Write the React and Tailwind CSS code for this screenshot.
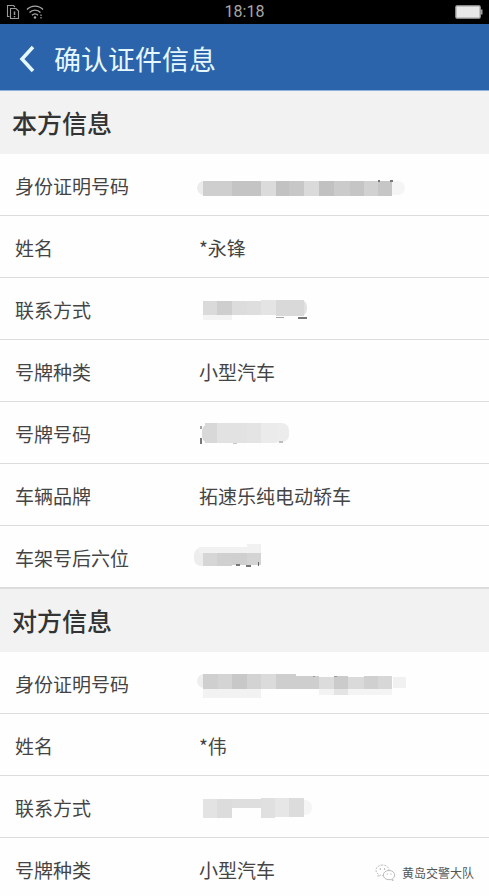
/* each block: x, y, width, height, fill */
const MASKS = {
  ownId: {
    blocks: [
      [4, 14, 29, 15, '#cecece'], [33, 14, 29, 15, '#c4c4c4'], [62, 14, 15, 15, '#dbdbdb'],
      [77, 14, 13, 15, '#c2c2c2'], [90, 14, 15, 15, '#c7c7c7'], [105, 14, 15, 15, '#dadada'],
      [120, 14, 15, 15, '#c1c1c1'], [135, 14, 16, 15, '#cbcbcb'], [151, 14, 14, 15, '#c5c5c5'],
      [165, 14, 14, 15, '#d1d1d1'], [179, 14, 14, 15, '#c6c6c6'],
      [179, 13, 2, 2, '#777777'], [191, 13, 3, 2, '#777777'],
    ],
    soft: [[-2, 14, 14, 14, '#ececec'], [184, 14, 22, 14, '#f5f5f5']],
  },
  ownPhone: {
    blocks: [
      [4, 10, 14, 14, '#dadada'], [18, 10, 15, 14, '#cecece'], [33, 10, 15, 14, '#dcdcdc'],
      [48, 10, 14, 14, '#dedede'], [62, 9, 15, 15, '#e4e4e4'], [77, 9, 28, 16, '#d9d9d9'],
      [4, 24, 29, 5, '#f3f3f3'], [77, 26, 8, 1, '#a3a3a3'], [99, 26, 9, 2, '#777777'],
    ],
    soft: [[96, 9, 12, 16, '#e2e2e2']],
  },
  ownPlate: {
    blocks: [
      [1, 11, 2, 3, '#a3a3a3'], [1, 23, 2, 6, '#777777'],
      [6, 8, 12, 20, '#d8d8d8'], [18, 8, 30, 20, '#e2e2e2'], [48, 8, 14, 20, '#e4e4e4'],
      [62, 8, 16, 20, '#ebebeb'], [34, 28, 4, 1, '#c9c9c9'], [80, 26, 4, 2, '#bdbdbd'],
    ],
    soft: [[3, 9, 14, 19, '#d8d8d8'], [66, 8, 24, 19, '#ececec']],
  },
  ownFrame: {
    blocks: [
      [0, 8, 48, 6, '#f1f1f1'], [48, 5, 14, 9, '#f1f1f1'],
      [4, 14, 14, 13, '#d6d6d6'], [18, 14, 15, 13, '#d0d0d0'], [33, 14, 15, 12, '#cfcfcf'],
      [48, 14, 14, 12, '#d4d4d4'],
      [37, 25, 4, 2, '#777777'], [47, 26, 5, 2, '#777777'], [59, 23, 1, 4, '#666666'],
    ],
    soft: [[-5, 9, 16, 18, '#ededed']],
  },
  otherId: {
    blocks: [
      [4, 9, 15, 15, '#cfcfcf'], [19, 9, 14, 15, '#d4d4d4'], [33, 9, 15, 15, '#c8c8c8'],
      [48, 9, 14, 15, '#d3d3d3'], [62, 9, 15, 15, '#dbdbdb'], [77, 9, 20, 15, '#cecece'],
      [97, 11, 23, 13, '#cecece'], [120, 12, 15, 12, '#dcdcdc'], [135, 11, 14, 13, '#cbcbcb'],
      [149, 12, 16, 12, '#dadada'], [165, 11, 14, 13, '#d0d0d0'], [179, 11, 14, 13, '#d7d7d7'],
      [4, 24, 58, 9, '#f2f2f2'], [120, 24, 15, 6, '#f3f3f3'], [135, 24, 14, 6, '#e4e4e4'],
      [149, 24, 44, 6, '#f4f4f4'], [194, 12, 13, 11, '#f1f1f1'],
      [114, 11, 2, 1, '#999999'], [135, 11, 3, 1, '#999999'],
    ],
    soft: [[-2, 9, 14, 14, '#eeeeee']],
  },
  otherPhone: {
    blocks: [
      [4, 10, 14, 19, '#e3e3e3'], [18, 10, 15, 19, '#dcdcdc'], [33, 10, 29, 9, '#dedede'],
      [62, 9, 14, 20, '#e0e0e0'], [76, 9, 14, 19, '#e6e6e6'], [90, 9, 15, 19, '#dcdcdc'],
    ],
    soft: [[96, 11, 17, 15, '#f5f5f5']],
  },
}

const SECTIONS = [
  {
    title: '本方信息',
    rows: [
      { label: '身份证明号码', mask: 'ownId' },
      { label: '姓名', value: '*永锋' },
      { label: '联系方式', mask: 'ownPhone' },
      { label: '号牌种类', value: '小型汽车' },
      { label: '号牌号码', mask: 'ownPlate' },
      { label: '车辆品牌', value: '拓速乐纯电动轿车' },
      { label: '车架号后六位', mask: 'ownFrame' },
    ],
  },
  {
    title: '对方信息',
    rows: [
      { label: '身份证明号码', mask: 'otherId' },
      { label: '姓名', value: '*伟' },
      { label: '联系方式', mask: 'otherPhone' },
      { label: '号牌种类', value: '小型汽车' },
    ],
  },
]

function Mask({ name }) {
  const { blocks, soft } = MASKS[name]
  return (
    <svg className="block h-10 w-[210px] overflow-visible" viewBox="0 0 210 40" aria-hidden="true">
      {soft.map(([x, y, w, h, fill], i) => (
        <rect key={i} x={x} y={y} width={w} height={h} rx="7" fill={fill} />
      ))}
      {blocks.map(([x, y, w, h, fill], i) => (
        <rect key={i} x={x} y={y} width={w} height={h} fill={fill} />
      ))}
    </svg>
  )
}

function StatusBar() {
  return (
    <div className="grid h-6 shrink-0 grid-cols-3 items-center bg-black px-1.5 text-[#a8a8a8]">
      <div className="flex items-center gap-1.5">
        <svg width="14" height="16" viewBox="0 0 14 16" fill="none" stroke="#9a9a9a" strokeWidth="1.1">
          <path d="M3.5 12.5h-2v-11h6l1.5 1.5" />
          <path d="M4.5 4.5h5.5l2.5 2.5v7.5h-8z" />
          <path d="M8.5 7.5v3.500M8.500 12v1.300" strokeWidth="1.5" />
        </svg>
        <svg width="18" height="16" viewBox="0 0 18 16" fill="none" stroke="#a8a8a8" strokeWidth="1.4">
          <path d="M1 5.500C5.500 1 12.500 1 17 5.500M3.500 8.500c3.200-3.200 7.800-3.200 11 0M6 11.200c1.800-1.800 4.200-1.800 6 0" />
          <circle cx="9" cy="13.5" r="1.2" fill="#a8a8a8" stroke="none" />
          <path d="M15 10.500v1.500M15 13v1.500" strokeWidth="1.2" />
        </svg>
      </div>
      <div className="text-center font-['Roboto',sans-serif] text-base leading-6">18:18</div>
      <svg className="justify-self-end" width="28" height="14" viewBox="0 0 28 14">
        <rect x="1" y="1" width="24" height="12" rx="1" fill="#e8e8e8" stroke="#b5b5b5" strokeWidth="1.5" />
        <rect x="25.5" y="4.5" width="2" height="5" fill="#a0a0a0" />
      </svg>
    </div>
  )
}

function Watermark() {
  return (
    <div className="absolute right-[15px] bottom-3.5 flex items-center gap-1.5">
      <svg width="21" height="18" viewBox="0 0 21 18" fill="#ffffff" stroke="#b4b4b4" strokeWidth="0.9">
        <path d="M7.500 1C3.800 1 1 3.300 1 6.200c0 1.700 1 3.100 2.500 4.100l-.6 2.200 2.400-1.300c.7.200 1.400.3 2.200.3 3.700 0 6.500-2.300 6.500-5.200S11.200 1 7.500 1z" strokeDasharray="2 1" />
        <path d="M14 6.500c-3.200 0-5.700 2-5.700 4.600s2.500 4.600 5.700 4.600c.7 0 1.300-.1 1.900-.3l2.200 1.200-.6-1.900c1.400-.9 2.200-2.100 2.200-3.600 0-2.600-2.500-4.600-5.700-4.600z" />
        <g fill="#9a9a9a" stroke="none">
          <circle cx="5.300" cy="5" r="0.7" />
          <circle cx="9.500" cy="5" r="0.7" />
          <circle cx="12.200" cy="10" r="0.6" />
          <circle cx="16" cy="10" r="0.6" />
        </g>
      </svg>
      <span className="text-xs text-[#555555]">黄岛交警大队</span>
    </div>
  )
}

export default function App() {
  return (
    <div className="relative flex h-screen flex-col overflow-hidden bg-[#fefefe] font-['Noto_Sans_CJK_SC',sans-serif] text-[#444444]">
      <StatusBar />

      <header className="flex h-[67px] shrink-0 items-center gap-4 border-b border-[#8fb0d8] bg-[#2b64aa] pt-1 pl-[18px] text-[#e6f8ff]">
        <button type="button" aria-label="返回">
          <svg width="20" height="30" viewBox="0 0 20 30" fill="none" stroke="currentColor" strokeWidth="3.5">
            <path d="M15 3L4 15l11 12" />
          </svg>
        </button>
        <h1 className="text-[27px] leading-9">确认证件信息</h1>
      </header>

      <main className="min-h-0 flex-1 overflow-y-auto [scrollbar-width:none]">
        {SECTIONS.map((section) => (
          <section key={section.title} className="border-b border-[#dcdcdc]">
            <h2 className="flex h-[63px] items-center bg-[#f2f2f2] pl-3 text-[25px] font-medium text-[#333333]">
              {section.title}
            </h2>
            <dl>
              {section.rows.map((row) => (
                <div key={row.label} className="flex h-[62px] items-center border-b border-[#dcdcdc] pt-1 pl-[15px] text-[19px]">
                  <dt className="w-[184px] shrink-0">{row.label}</dt>
                  <dd className="min-w-0 flex-1">{row.mask ? <Mask name={row.mask} /> : row.value}</dd>
                </div>
              ))}
            </dl>
          </section>
        ))}
      </main>

      <Watermark />
    </div>
  )
}
